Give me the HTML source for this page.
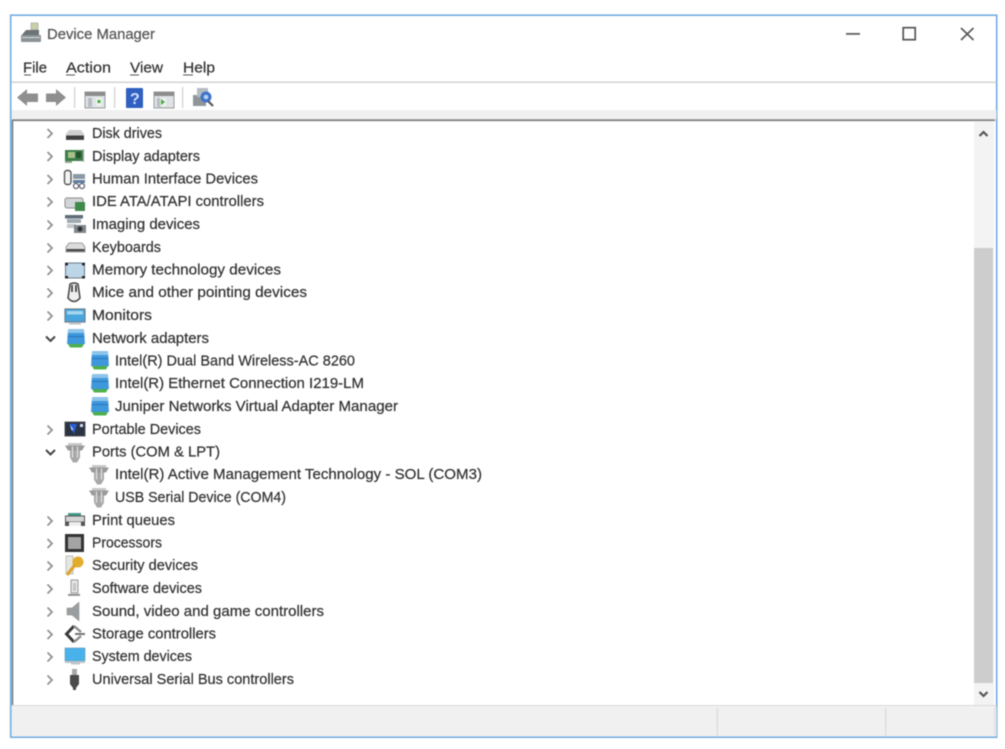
<!DOCTYPE html>
<html><head><meta charset="utf-8"><style>
html,body{margin:0;padding:0;background:#fff;width:1005px;height:749px;overflow:hidden}
svg{display:block;filter:blur(.6px)}
text{font-family:"Liberation Sans",sans-serif;font-size:14.5px;fill:#333;stroke:#333;stroke-width:.22px}
</style></head><body>
<svg width="1005" height="749" viewBox="0 0 1005 749" xmlns="http://www.w3.org/2000/svg">
<defs>
<path id="cr" d="M0 -4.5L4.5 0L0 4.5" fill="none" stroke="#929292" stroke-width="1.8"/>
<path id="cd" d="M-4.5 -2L0 2.5L4.5 -2" fill="none" stroke="#444" stroke-width="2"/>
<g id="net"><path d="M-8 -9Q-8 -10 -6 -10H6Q8 -10 8 -9L9 5H-9Z" fill="#3f97dc"/><path d="M-8 -9Q-8 -10 -6 -10H6Q8 -10 8 -9V-6H-8Z" fill="#8cc4ea"/><rect x="-8.5" y="-3" width="17" height="1" fill="#2677b8"/><path d="M-8 5H8L6 8.5H-6Z" fill="#4db04c"/></g>
<g id="port"><path d="M-10 -7H10L7 -2H-7Z" fill="#9a9a9a"/><path d="M-7 -9.5H7V-7H-7Z" fill="#c8c8c8"/><path d="M-5 -2H5V5L2 10H-2L-5 5Z" fill="#a8a8a8"/><path d="M-2.5 -6V5M2.5 -6V5" stroke="#e4e4e4" stroke-width="1.2"/></g>
<g id="win"><rect x="0" y="0" width="20" height="16" fill="#dfe3e6" stroke="#9a9a9a" stroke-width="1"/><rect x="0" y="0" width="20" height="4" fill="#8d8d8d"/><rect x="3" y="6" width="4" height="9" fill="#b6bcc4"/></g>
</defs>

<!-- window -->
<rect x="10.7" y="15.2" width="986" height="722" fill="#fff" stroke="#72ade0" stroke-width="1.6"/>

<!-- title bar -->
<g transform="translate(21,23)">
<rect x="10" y="0" width="7" height="7" fill="#c9d0a8" stroke="#999" stroke-width=".6"/>
<path d="M0 13L5 7H18V13Z" fill="#6c7276"/><rect x="0" y="12" width="20" height="7" rx="1" fill="#8a9296"/><rect x="1" y="14" width="18" height="1" fill="#d5d9db"/>
</g>
<text x="47" y="39" textLength="108" lengthAdjust="spacingAndGlyphs" style="fill:#555;stroke:#555">Device Manager</text>
<rect x="846" y="33" width="14" height="1.8" fill="#606060"/>
<rect x="903.2" y="27.7" width="12" height="12" fill="none" stroke="#555" stroke-width="1.7"/>
<path d="M961 28L973.5 40M973.5 28L961 40" stroke="#555" stroke-width="1.6"/>

<!-- menu -->
<g>
<text x="23" y="72.5" textLength="24" lengthAdjust="spacingAndGlyphs">File</text>
<text x="66" y="72.5" textLength="45" lengthAdjust="spacingAndGlyphs">Action</text>
<text x="130" y="72.5" textLength="33" lengthAdjust="spacingAndGlyphs">View</text>
<text x="183" y="72.5" textLength="32" lengthAdjust="spacingAndGlyphs">Help</text>
<path d="M24 75H31M66 75H75M130 75H139M183 75H193" stroke="#555" stroke-width="1"/>
</g>
<rect x="11.5" y="81.5" width="985" height="1.4" fill="#cfcfcf"/>

<!-- toolbar -->
<path d="M17 97.5L27 89V93.5H38V102H27V106Z" fill="#8f8f8f"/>
<path d="M66 97.5L56 89V93.5H46V102H56V106Z" fill="#8f8f8f"/>
<rect x="74" y="87" width="1.2" height="21" fill="#cfcfcf"/>
<use href="#win" x="85" y="92"/>
<rect x="96" y="98" width="6" height="8" fill="#eef2ee"/><rect x="97.5" y="100" width="3" height="3" fill="#3fae3f"/>
<rect x="114" y="87" width="1.2" height="21" fill="#cfcfcf"/>
<rect x="126" y="88" width="17" height="20" rx="1" fill="#2f5fc0"/>
<text x="130" y="104" style="font-size:16px;font-weight:bold;fill:#cfe0ff;stroke:none">?</text>
<use href="#win" x="154" y="92"/>
<rect x="160" y="98" width="6" height="8" fill="#eef2ee"/><path d="M161 99L165 102L161 105Z" fill="#3fae3f"/>
<rect x="182" y="87" width="1.2" height="21" fill="#cfcfcf"/>
<g transform="translate(193,88)">
<rect x="0" y="7" width="13" height="11" fill="#8f969a"/><rect x="4" y="0" width="11" height="9" fill="#b4bcc2"/>
<circle cx="13" cy="9" r="5.5" fill="#3f74cc"/><circle cx="13" cy="9" r="2.3" fill="#b9d2f2"/>
<path d="M15 13L20 18" stroke="#556" stroke-width="2.2"/>
</g>

<rect x="11.5" y="110" width="985" height="9" fill="#f0f0f0"/>
<rect x="12" y="119.3" width="983" height="1.8" fill="#7e7e7e"/>
<rect x="11.7" y="120" width="1.6" height="586" fill="#6f7f8c"/>

<!-- scrollbar -->
<rect x="974" y="121" width="20" height="584" fill="#f3f3f3"/>
<rect x="974" y="248" width="19" height="435" fill="#cdcdcd"/>
<path d="M979.5 136L983.5 132L987.5 136" fill="none" stroke="#555" stroke-width="2.2"/>
<path d="M979.5 692L983.5 696L987.5 692" fill="none" stroke="#555" stroke-width="2.2"/>

<!-- chevrons -->
<use href="#cr" x="47.5" y="133.5"/><use href="#cr" x="47.5" y="156.5"/><use href="#cr" x="47.5" y="179.5"/><use href="#cr" x="47.5" y="202"/><use href="#cr" x="47.5" y="225"/><use href="#cr" x="47.5" y="248"/><use href="#cr" x="47.5" y="270.5"/><use href="#cr" x="47.5" y="293"/><use href="#cr" x="47.5" y="316"/>
<use href="#cd" x="50.5" y="338.5"/>
<use href="#cr" x="47.5" y="430"/>
<use href="#cd" x="50.5" y="452"/>
<use href="#cr" x="47.5" y="521"/><use href="#cr" x="47.5" y="543.5"/><use href="#cr" x="47.5" y="566"/><use href="#cr" x="47.5" y="589"/><use href="#cr" x="47.5" y="612"/><use href="#cr" x="47.5" y="634.5"/><use href="#cr" x="47.5" y="657"/><use href="#cr" x="47.5" y="680"/>

<!-- labels -->
<text x="92" y="138" textLength="70" lengthAdjust="spacingAndGlyphs">Disk drives</text>
<text x="92" y="161" textLength="108" lengthAdjust="spacingAndGlyphs">Display adapters</text>
<text x="92" y="183.5" textLength="166" lengthAdjust="spacingAndGlyphs">Human Interface Devices</text>
<text x="92" y="206" textLength="172" lengthAdjust="spacingAndGlyphs">IDE ATA/ATAPI controllers</text>
<text x="92" y="229" textLength="108" lengthAdjust="spacingAndGlyphs">Imaging devices</text>
<text x="92" y="252" textLength="69" lengthAdjust="spacingAndGlyphs">Keyboards</text>
<text x="92" y="274.5" textLength="189" lengthAdjust="spacingAndGlyphs">Memory technology devices</text>
<text x="92" y="297" textLength="215" lengthAdjust="spacingAndGlyphs">Mice and other pointing devices</text>
<text x="92" y="320" textLength="60" lengthAdjust="spacingAndGlyphs">Monitors</text>
<text x="92" y="343" textLength="117" lengthAdjust="spacingAndGlyphs">Network adapters</text>
<text x="115" y="365.5" textLength="240" lengthAdjust="spacingAndGlyphs">Intel(R) Dual Band Wireless-AC 8260</text>
<text x="115" y="388" textLength="249" lengthAdjust="spacingAndGlyphs">Intel(R) Ethernet Connection I219-LM</text>
<text x="115" y="411" textLength="283" lengthAdjust="spacingAndGlyphs">Juniper Networks Virtual Adapter Manager</text>
<text x="92" y="434" textLength="109" lengthAdjust="spacingAndGlyphs">Portable Devices</text>
<text x="92" y="456.5" textLength="128" lengthAdjust="spacingAndGlyphs">Ports (COM &amp; LPT)</text>
<text x="115" y="479" textLength="367" lengthAdjust="spacingAndGlyphs">Intel(R) Active Management Technology - SOL (COM3)</text>
<text x="115" y="502" textLength="171" lengthAdjust="spacingAndGlyphs">USB Serial Device (COM4)</text>
<text x="92" y="525" textLength="83" lengthAdjust="spacingAndGlyphs">Print queues</text>
<text x="92" y="547.5" textLength="70" lengthAdjust="spacingAndGlyphs">Processors</text>
<text x="92" y="570" textLength="106" lengthAdjust="spacingAndGlyphs">Security devices</text>
<text x="92" y="593" textLength="110" lengthAdjust="spacingAndGlyphs">Software devices</text>
<text x="92" y="616" textLength="232" lengthAdjust="spacingAndGlyphs">Sound, video and game controllers</text>
<text x="92" y="638.5" textLength="124" lengthAdjust="spacingAndGlyphs">Storage controllers</text>
<text x="92" y="661" textLength="100" lengthAdjust="spacingAndGlyphs">System devices</text>
<text x="92" y="684" textLength="202" lengthAdjust="spacingAndGlyphs">Universal Serial Bus controllers</text>

<!-- icons -->
<!-- disk -->
<path d="M66 134L69 130H81L84 134V140H66Z" fill="#cfcfcf"/><rect x="66" y="135.5" width="18" height="4.4" fill="#3f3f3f"/>
<!-- display -->
<rect x="65" y="150" width="18" height="11" fill="#3f7d4a"/><rect x="68" y="152" width="7" height="6" fill="#a8c08a"/><rect x="76" y="152" width="5" height="6" fill="#24532f"/><path d="M83.5 149V162" stroke="#aaa" stroke-width="1.2"/><rect x="65" y="161" width="7" height="2" fill="#8a8"/>
<!-- HID -->
<rect x="64.5" y="170.5" width="6.5" height="14" rx="2.5" fill="#f4f4f4" stroke="#555" stroke-width="1.4"/><rect x="73" y="174" width="12" height="5" fill="#8a9aa4"/><rect x="73" y="180" width="12" height="3" fill="#5f7ea0"/><circle cx="76" cy="186" r="2.5" fill="none" stroke="#667" stroke-width="1.3"/><circle cx="82" cy="186" r="2.5" fill="none" stroke="#667" stroke-width="1.3"/>
<!-- IDE -->
<rect x="65" y="198" width="18" height="10" rx="2" fill="#d2d6d8" stroke="#8a8a8a"/><rect x="75" y="202" width="10" height="9" fill="#3e8a4a"/>
<!-- imaging -->
<rect x="65" y="215" width="18" height="3.5" fill="#5f6d79"/><path d="M67 219H81V223H67Z" fill="#a0a9b0"/><rect x="67" y="224" width="9" height="4" fill="#c2c8cc"/><rect x="74" y="225" width="12" height="8" fill="#7f868c"/><circle cx="80" cy="229" r="2.5" fill="#333"/>
<!-- keyboard -->
<path d="M69 243H82L85 247V252H66V247Z" fill="#dcdcdc" stroke="#8a8a8a" stroke-width=".8"/><rect x="66.5" y="249" width="18" height="2.4" fill="#4a4a4a"/>
<!-- memory -->
<rect x="65.5" y="263" width="19" height="15" fill="#bcd6e8" stroke="#6a7d8a" stroke-width="1"/><rect x="65" y="263" width="3" height="2.4" fill="#222"/><rect x="82" y="263" width="3" height="2.4" fill="#222"/><rect x="65" y="276" width="3" height="2.4" fill="#222"/><rect x="82" y="276" width="3" height="2.4" fill="#222"/>
<!-- mouse -->
<path d="M70 284Q74 282 78 284L80 298Q74 305 68 298Z" fill="#eee" stroke="#444" stroke-width="1.5"/><path d="M72 285V292M76 285V292" stroke="#333" stroke-width="1.6"/>
<!-- monitor -->
<rect x="65" y="309" width="20" height="13" fill="#48a6de" stroke="#6f7f8c" stroke-width="1.2"/><rect x="67" y="311" width="16" height="3.5" fill="#a4d6f0"/><rect x="69" y="323" width="12" height="1.5" fill="#b8c0c6"/>
<!-- network -->
<use href="#net" x="76" y="339"/>
<use href="#net" x="100" y="361"/>
<use href="#net" x="100" y="384"/>
<use href="#net" x="100" y="407"/>
<!-- portable -->
<rect x="65" y="422" width="20" height="14" fill="#2a3244" stroke="#555" stroke-width="1"/><path d="M69 424H77L74 434Z" fill="#2860d8"/><path d="M70 425L73 429L72 431Z" fill="#dfe8ff"/><rect x="80" y="424" width="3" height="3" fill="#dde"/>
<!-- ports -->
<use href="#port" x="75" y="452.5"/>
<use href="#port" x="99" y="474.5"/>
<use href="#port" x="99" y="497.5"/>
<!-- print -->
<rect x="68" y="513" width="13" height="3" fill="#3f9a8a"/><path d="M65.5 516H84.5V522H65.5Z" fill="#d4d4d4" stroke="#555"/><rect x="65" y="522" width="20" height="4" fill="#555"/><rect x="69" y="522" width="12" height="4" fill="#eee"/>
<!-- processors -->
<rect x="65" y="534" width="19" height="18" fill="#333"/><rect x="68" y="537" width="13" height="12" fill="#a4a4a4"/>
<!-- security -->
<rect x="66" y="556" width="7" height="18" fill="#e6e8e0" stroke="#aaa" stroke-width=".7"/>
<circle cx="78" cy="562" r="5.5" fill="#e2ad2c"/><path d="M75 565L67 575" stroke="#dca52c" stroke-width="3.2"/>
<!-- software -->
<rect x="71" y="580" width="7" height="13" fill="#e8e8e8" stroke="#999"/><rect x="73" y="583" width="3" height="8" fill="#c4c4c4"/><rect x="68" y="594" width="12" height="1.8" fill="#888"/>
<!-- sound -->
<path d="M67 608H72L79 602V621L72 615H67Z" fill="#9a9ea0" stroke="#888" stroke-width=".5"/>
<!-- storage -->
<path d="M74 626L66.5 634L74 642" fill="none" stroke="#3a3a3a" stroke-width="3"/><path d="M74 626L81 632M81 636L74 642" fill="none" stroke="#8a8a8a" stroke-width="2.4"/><path d="M75 634H85" stroke="#666" stroke-width="1.8"/>
<!-- system -->
<rect x="65" y="648" width="20" height="13" fill="#4ab2ea" stroke="#6a93ad" stroke-width=".6"/><rect x="65" y="661" width="20" height="2" fill="#bcc4ca"/><rect x="71" y="663" width="9" height="1.5" fill="#c0c6ca"/>
<!-- usb -->
<rect x="72" y="669" width="5" height="6" fill="#a8a8a8"/><path d="M70 675H79V684L76 688V690H73V688L70 684Z" fill="#4a4a4a"/>

<!-- status bar -->
<rect x="11.5" y="705" width="985" height="1.4" fill="#dcdcdc"/>
<rect x="11.5" y="707" width="985" height="29.5" fill="#f0f0f0"/>
<rect x="716.5" y="708" width="1.4" height="28" fill="#dddddd"/>
<rect x="885" y="708" width="1.4" height="28" fill="#dddddd"/>
<rect x="994" y="707" width="1.2" height="29" fill="#dddddd"/>
</svg>
</body></html>
